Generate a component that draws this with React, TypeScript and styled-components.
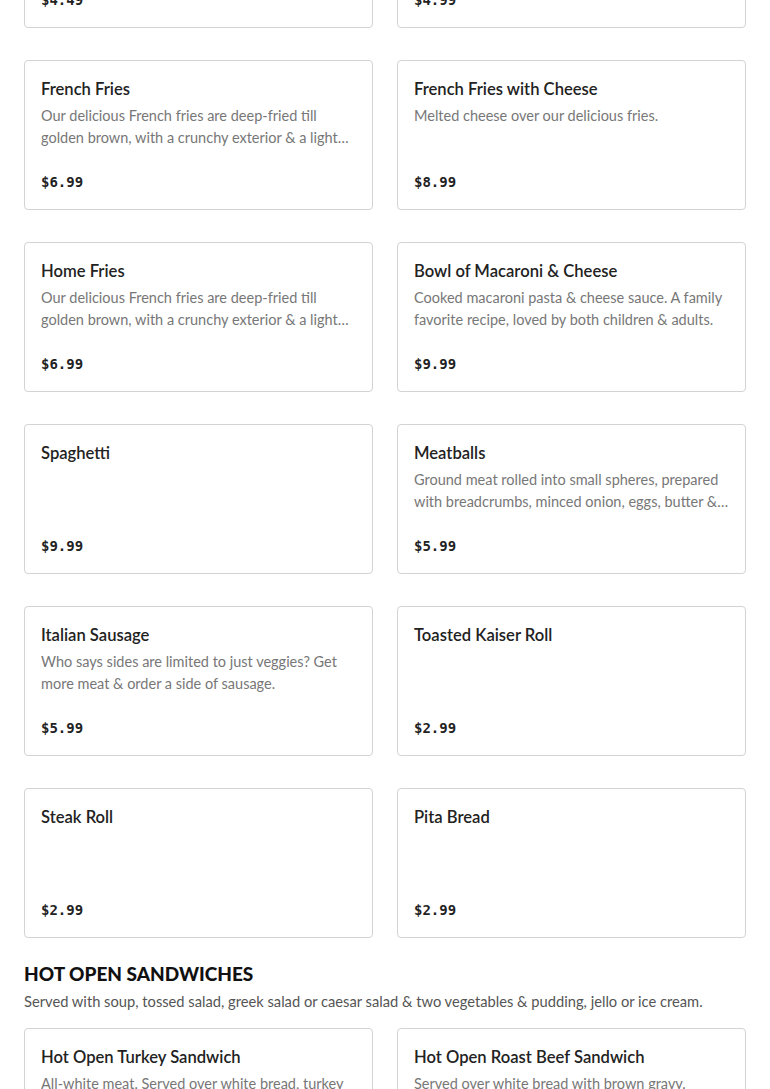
import React from 'react';
import styled, { createGlobalStyle } from 'styled-components';

interface MenuItem {
  title: string;
  description?: string;
  price: string;
}

interface MenuSection {
  heading?: string;
  note?: string;
  items: MenuItem[];
}

const friesText =
  'Our delicious French fries are deep-fried till golden brown, with a crunchy exterior & a light fluffy interior.';

const sections: MenuSection[] = [
  {
    items: [
      { title: 'Onion Rings', description: 'Crispy battered onion rings.', price: '$4.49' },
      { title: 'Sweet Potato Fries', description: 'Golden sweet potato fries.', price: '$4.99' },
      { title: 'French Fries', description: friesText, price: '$6.99' },
      { title: 'French Fries with Cheese', description: 'Melted cheese over our delicious fries.', price: '$8.99' },
      { title: 'Home Fries', description: friesText, price: '$6.99' },
      {
        title: 'Bowl of Macaroni & Cheese',
        description: 'Cooked macaroni pasta & cheese sauce. A family favorite recipe, loved by both children & adults.',
        price: '$9.99',
      },
      { title: 'Spaghetti', price: '$9.99' },
      {
        title: 'Meatballs',
        description:
          'Ground meat rolled into small spheres, prepared with breadcrumbs, minced onion, eggs, butter & seasoning.',
        price: '$5.99',
      },
      {
        title: 'Italian Sausage',
        description: 'Who says sides are limited to just veggies? Get more meat & order a side of sausage.',
        price: '$5.99',
      },
      { title: 'Toasted Kaiser Roll', price: '$2.99' },
      { title: 'Steak Roll', price: '$2.99' },
      { title: 'Pita Bread', price: '$2.99' },
    ],
  },
  {
    heading: 'HOT OPEN SANDWICHES',
    note: 'Served with soup, tossed salad, greek salad or caesar salad & two vegetables & pudding, jello or ice cream.',
    items: [
      {
        title: 'Hot Open Turkey Sandwich',
        description: 'All-white meat. Served over white bread, turkey gravy & cranberry sauce.',
        price: '$15.99',
      },
      { title: 'Hot Open Roast Beef Sandwich', description: 'Served over white bread with brown gravy.', price: '$15.99' },
    ],
  },
];

const GlobalStyle = createGlobalStyle`
  body {
    margin: 0;
    background: #fff;
    font-family: Lato, "Liberation Sans", sans-serif;
    overflow: hidden;
  }
`;

// the screenshot is taken part way down the menu
const Page = styled.main`
  margin-top: -122px;
  padding: 0 24px;
`;

const Section = styled.section`
  margin-bottom: 24px;
`;

const Heading = styled.h2`
  margin: 0;
  font-size: 19px;
  line-height: 24px;
  font-weight: 900;
  color: #111;
`;

const Note = styled.p`
  margin: 4px 0 16px;
  font-size: 14.7px;
  line-height: 22px;
  color: #555;
`;

const Grid = styled.div`
  display: grid;
  grid-template-columns: 1fr 1fr;
  column-gap: 24px;
  row-gap: 32px;
`;

const Card = styled.div`
  box-sizing: border-box;
  height: 150px;
  padding: 16px;
  border: 1px solid #d3d3d3;
  border-radius: 4px;
  display: flex;
  flex-direction: column;
`;

const Title = styled.h3`
  margin: 0;
  font-size: 16.6px;
  line-height: 24px;
  font-weight: 600;
  color: #222;
`;

const Description = styled.p`
  margin: 4px 0 0;
  font-size: 14.5px;
  line-height: 22px;
  color: #777;
  display: -webkit-box;
  -webkit-line-clamp: 2;
  -webkit-box-orient: vertical;
  overflow: hidden;
`;

const Price = styled.span`
  margin-top: auto;
  font-family: "DejaVu Sans Mono", "Liberation Mono", monospace;
  font-size: 14px;
  line-height: 22px;
  font-weight: 700;
  color: #222;
`;

const App = (): JSX.Element => {
  return (
    <>
      <GlobalStyle />
      <Page>
        {sections.map((section, index) => (
          <Section key={index}>
            {section.heading && <Heading>{section.heading}</Heading>}
            {section.note && <Note>{section.note}</Note>}
            <Grid>
              {section.items.map((item, i) => (
                <Card key={i}>
                  <Title>{item.title}</Title>
                  {item.description && <Description>{item.description}</Description>}
                  <Price>{item.price}</Price>
                </Card>
              ))}
            </Grid>
          </Section>
        ))}
      </Page>
    </>
  );
};

export default App;
